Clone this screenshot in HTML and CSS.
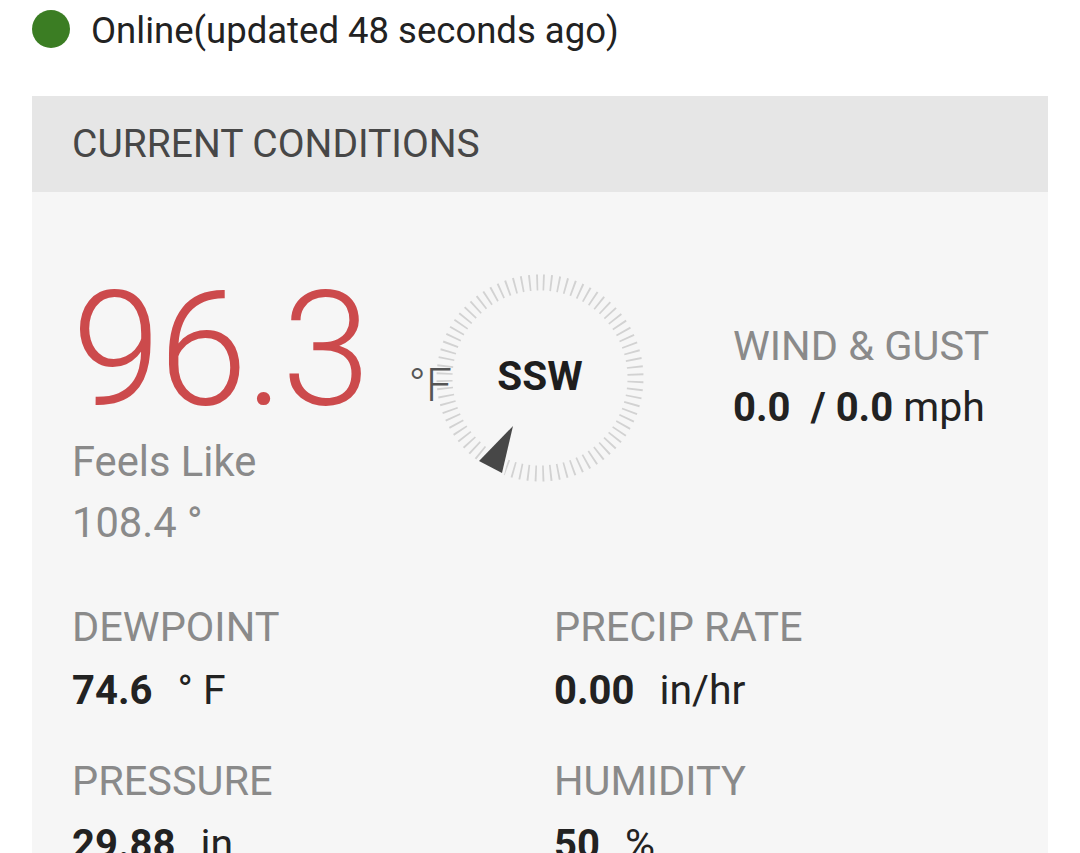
FILE: index.html
```html
<!DOCTYPE html>
<html>
<head>
<meta charset="utf-8">
<link rel="stylesheet" href="styles.css">
</head>
<body>
<div class="status">
  <span class="dot"></span>
  <span class="status-text">Online(updated 48 seconds ago)</span>
</div>
<section class="card">
  <header class="card-header">CURRENT CONDITIONS</header>
  <div class="card-body">
    <div class="top">
      <div class="temp">
        <div class="temp-row">
          <span class="temp-value">96.3</span>
          <span class="temp-unit">°F</span>
        </div>
        <div class="feels-label">Feels Like</div>
        <div class="feels-value">108.4 °</div>
      </div>
      <div class="compass">
        <svg width="208" height="208" viewBox="-104 -104 208 208">
          <circle r="95.5" fill="none" stroke="#d2d2d2" stroke-width="16" stroke-dasharray="1.8 5.7" stroke-dashoffset="-2.85" transform="rotate(-90)"/>
          <polygon points="-27,48 -61,83 -38,95" fill="#474747" stroke="#f6f6f6" stroke-width="5" stroke-linejoin="round"/>
          <polygon points="-27,48 -61,83 -38,95" fill="#474747"/>
        </svg>
        <span class="compass-dir">SSW</span>
      </div>
      <div class="wind">
        <div class="label">WIND &amp; GUST</div>
        <div class="value"><b>0.0</b>&nbsp; <b>/ 0.0</b> mph</div>
      </div>
    </div>
    <div class="grid">
      <div class="cell">
        <div class="label">DEWPOINT</div>
        <div class="value"><b>74.6</b><span class="unit">° F</span></div>
      </div>
      <div class="cell">
        <div class="label">PRECIP RATE</div>
        <div class="value"><b>0.00</b><span class="unit">in/hr</span></div>
      </div>
      <div class="cell">
        <div class="label">PRESSURE</div>
        <div class="value"><b>29.88</b><span class="unit">in</span></div>
      </div>
      <div class="cell">
        <div class="label">HUMIDITY</div>
        <div class="value"><b>50</b><span class="unit">%</span></div>
      </div>
    </div>
  </div>
</section>
</body>
</html>
```
FILE: styles.css
```css
html, body {
  margin: 0;
  padding: 0;
  background: #ffffff;
  font-family: Roboto, "Liberation Sans", sans-serif;
  color: #222;
  overflow: hidden;
}

.status {
  display: flex;
  align-items: center;
  height: 60px;
  padding-left: 32px;
}

.dot {
  width: 38px;
  height: 38px;
  border-radius: 50%;
  background: #3b7d23;
  flex: none;
  margin-top: -2px;
}

.status-text {
  margin-left: 21px;
  font-size: 36.5px;
  color: #222;
}

.card {
  margin: 36px 32px 0 32px;
  background: #f6f6f6;
}

.card-header {
  height: 96px;
  display: flex;
  align-items: center;
  padding-left: 40px;
  background: #e6e6e6;
  font-size: 39px;
  color: #474747;
}

.card-body {
  padding: 0 40px 40px 40px;
}

.top {
  display: flex;
  align-items: flex-start;
}

.temp {
  width: 364px;
  flex: none;
  margin-top: 78px;
}

.temp-row {
  display: flex;
  align-items: baseline;
  white-space: nowrap;
}

.temp-value {
  font-size: 160px;
  line-height: 160px;
  font-weight: 300;
  color: #cc4a4c;
  letter-spacing: -2px;
}

.temp-unit {
  margin-left: 40px;
  font-size: 46px;
  font-weight: 300;
  color: #555;
  position: relative;
  top: -3px;
}

.feels-label,
.feels-value {
  font-size: 41.7px;
  line-height: 48px;
  color: #8a8a8a;
}

.feels-label {
  margin-top: 8px;
}

.feels-value {
  margin-top: 13px;
}

.compass {
  position: relative;
  width: 208px;
  height: 208px;
  flex: none;
  margin-top: 82px;
}

.compass svg {
  display: block;
}

.compass-dir {
  position: absolute;
  left: 0;
  right: 0;
  top: 78px;
  text-align: center;
  font-size: 40.5px;
  line-height: 48px;
  font-weight: 700;
  color: #1e1e1e;
}

.wind {
  margin-left: 89px;
  margin-top: 130px;
}

.label {
  font-size: 41.5px;
  line-height: 48px;
  color: #8a8a8a;
  white-space: nowrap;
}

.value {
  margin-top: 15px;
  font-size: 41px;
  line-height: 48px;
  color: #222;
  white-space: nowrap;
}

.value b {
  font-weight: 700;
  font-size: 40px;
}

.value .unit {
  margin-left: 25px;
}

.wind .value {
  margin-top: 13px;
}

.grid {
  display: grid;
  grid-template-columns: 482px 1fr;
  row-gap: 42px;
  margin-top: 56px;
}
```
